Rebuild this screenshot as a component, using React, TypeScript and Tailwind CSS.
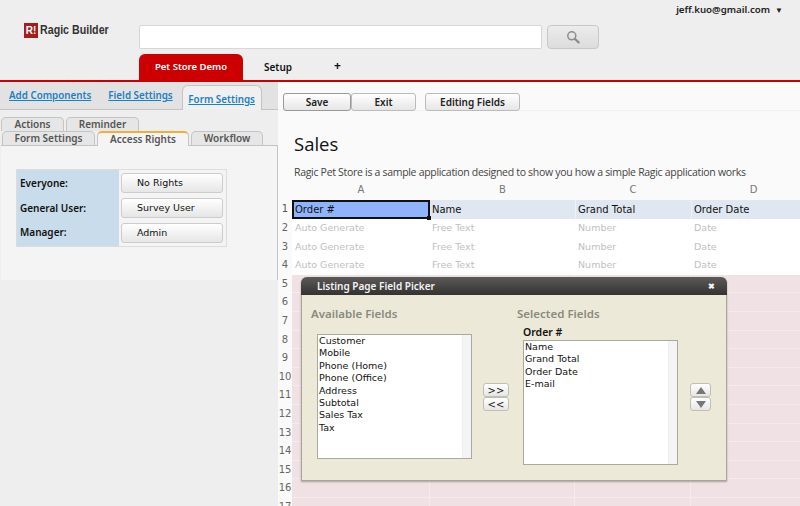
import React from "react";

const bold = "font-['Noto_Sans',sans-serif] font-semibold";

function Btn({ children, className = "" }: { children: React.ReactNode; className?: string }) {
  return (
    <div className={`flex items-center justify-center whitespace-nowrap rounded-[3px] border border-[#bbb] bg-gradient-to-b from-white to-[#e6e6e6] text-[10px] text-[#222] ${className}`}>
      {children}
    </div>
  );
}

function SideTab({ label, className = "" }: { label: string; className?: string }) {
  return (
    <div className={`flex h-[14px] items-center justify-center whitespace-nowrap rounded-t-[5px] border border-b-0 border-[#c4c4c4] bg-[#e6e6e6] text-[10px] text-[#555] ${bold} ${className}`}>
      {label}
    </div>
  );
}

const gridRows = [2, 3, 4];
const pinkRows = [5, 6, 7, 8, 9, 10, 11, 12, 13, 14, 15, 16, 17];

function Rights({ label }: { label: string }) {
  return (
    <Btn className="h-[20px] w-[102px] !justify-start !border-[#ccc] pl-[15px] font-['DejaVu_Sans',sans-serif] !text-[9.5px] !font-normal !text-[#111]">
      {label}
    </Btn>
  );
}

function ListBox({ items, className = "" }: { items: string[]; className?: string }) {
  return (
    <div className={`flex border border-[#a9a9a0] bg-white ${className}`}>
      <div className="flex-1 pl-[1px] font-['DejaVu_Sans',sans-serif] text-[9.5px] leading-[12.4px] text-[#111]">
        {items.map((i) => (
          <div key={i}>{i}</div>
        ))}
      </div>
      <div className="w-[9px] border-l border-[#eee] bg-[#f4f4f4]" />
    </div>
  );
}

export default function App() {
  return (
    <div className="relative h-[506px] w-[800px] overflow-hidden bg-[#fafafa] font-['DejaVu_Sans',sans-serif]">
      {/* header */}
      <header className="relative flex h-[82px] border-b-[2px] border-[#cc0000] bg-[#eeeeee]">
        <div className="flex w-[139px] shrink-0 items-start pl-[24px] pt-[23px]">
          <div className="flex h-[15px] w-[14px] items-center justify-center bg-[#a51c1c] font-['Liberation_Sans',sans-serif] text-[10px] font-bold text-white">
            R!
          </div>
          <span className="ml-[2px] origin-left scale-x-[0.82] whitespace-nowrap font-['Liberation_Sans',sans-serif] text-[13px] font-bold leading-[14px] text-[#333]">
            Ragic Builder
          </span>
        </div>
        <div className="flex flex-col">
          <div className="flex pt-[25px]">
            <div className="h-[24px] w-[403px] rounded-[2px] border border-[#d6d6d6] bg-white" />
            <div className="ml-[5px] flex h-[24px] w-[52px] items-center justify-center rounded-[4px] border border-[#c8c8c8] bg-gradient-to-b from-[#ececec] to-[#dcdcdc]">
              <svg width="14" height="14" viewBox="0 0 14 14" fill="none" stroke="#8c8c8c">
                <circle cx="5.8" cy="5.8" r="4" strokeWidth="1.5" />
                <path d="M8.8 8.8L12.6 12.4" strokeWidth="2.2" strokeLinecap="round" />
              </svg>
            </div>
          </div>
          <nav className={`mt-[5px] flex h-[26px] items-end text-[10px] ${bold}`}>
            <div className="flex h-[26px] w-[104px] items-center justify-center rounded-t-[6px] bg-[#cc0000] text-[9.5px] text-white">
              Pet Store Demo
            </div>
            <div className="flex h-[26px] items-center pl-[21px] text-[#111]">Setup</div>
            <div className="flex h-[26px] items-center pb-[3px] pl-[42px] text-[12px] font-bold text-[#111]">+</div>
          </nav>
        </div>
        <div className={`absolute right-[17px] top-[3px] flex items-center gap-[5px] text-[9.7px] text-[#222] ${bold}`}>
          <span>jeff.kuo@gmail.com</span>
          <span className="text-[8px]">▼</span>
        </div>
      </header>

      <div className="flex h-[424px]">
        {/* left panel */}
        <aside className="h-full w-[278px] shrink-0 bg-[#eeeeee]">
          <div className={`flex h-[28px] items-end whitespace-nowrap border-b border-[#c4c4c4] bg-[#e2e2e2] pl-[9px] text-[9.8px] text-[#1a7fc4] underline ${bold}`}>
            <div className="pb-[5px]">Add Components</div>
            <div className="ml-[17px] pb-[5px]">Field Settings</div>
            <div className="relative top-px ml-[9px] flex h-[25px] w-[80px] items-center justify-center rounded-t-[6px] border border-b-0 border-[#c4c4c4] bg-[#f0f0f0] pt-[4px]">
              Form Settings
            </div>
          </div>
          <div className="pl-[1px] pt-[7px]">
            <div className="flex gap-[2px]">
              <SideTab label="Actions" className="w-[63px]" />
              <SideTab label="Reminder" className="w-[73px]" />
            </div>
            <div className="flex h-[14px] pl-[1px]">
              <SideTab label="Form Settings" className="w-[93px]" />
              <div className={`ml-[2px] flex h-[15px] w-[92px] items-center justify-center whitespace-nowrap rounded-t-[5px] border-x border-t-2 border-x-[#c4c4c4] border-t-[#f0b040] bg-[#f4f4f4] text-[10px] text-[#555] ${bold}`}>
                Access Rights
              </div>
              <SideTab label="Workflow" className="ml-[2px] w-[72px]" />
            </div>
            <div className="h-[135px] w-[277px] border-r border-t border-[#c4c4c4] bg-[#f4f4f4] pl-[15px] pt-[23px]">
              <div className={`flex h-[78px] w-[211px] border border-[#dcdcdc] text-[10px] text-[#111] ${bold}`}>
                <div className="flex w-[102px] flex-col bg-[#c9dcec] pl-[3px] pt-[7px] leading-[12px]">
                  <div className="h-[24.5px]">Everyone:</div>
                  <div className="h-[24.5px]">General User:</div>
                  <div>Manager:</div>
                </div>
                <div className="flex flex-col gap-[5px] pl-[2px] pt-[3px]">
                  <Rights label="No Rights" />
                  <Rights label="Survey User" />
                  <Rights label="Admin" />
                </div>
              </div>
            </div>
          </div>
        </aside>

        {/* main */}
        <main className="relative min-w-0 flex-1">
          <div className={`flex h-[29px] items-start border-b border-[#f2f2f2] pl-[5px] pt-[11px] ${bold}`}>
            <Btn className="h-[18px] w-[68px] !border-[#999]">Save</Btn>
            <Btn className="h-[18px] w-[65px]">Exit</Btn>
            <Btn className="ml-[9px] h-[18px] w-[95px]">Editing Fields</Btn>
          </div>

          <div className="pl-[16px] pt-[20px]">
            <h1 className="font-['Open_Sans',sans-serif] text-[18.5px] leading-[26px] text-[#111]">Sales</h1>
            <p className="mt-[8px] whitespace-nowrap font-['Open_Sans',sans-serif] text-[10.5px] leading-[15px] tracking-[-0.3px] text-[#444]">
              Ragic Pet Store is a sample application designed to show you how a simple Ragic application works
            </p>
          </div>

          {/* sheet */}
          <div className="grid grid-cols-[14px_138px_145px_116px_125px] text-[9.5px] leading-[18.6px]">
            <div className="h-[20px]" />
            {["A", "B", "C", "D"].map((c) => (
              <div key={c} className="h-[20px] text-center text-[10px] leading-[20px] text-[#777]">
                {c}
              </div>
            ))}

            <div className="h-[18.6px] text-center text-[10px] text-[#555]">1</div>
            <div className="relative z-10 h-[19px] border-[2px] border-[#111] bg-[#90b4fb] pl-[1px] text-[10px] leading-[16px] text-[#111]">
              Order #
              <span className="absolute -bottom-[3px] -right-[3px] h-[4px] w-[4px] bg-[#111]" />
            </div>
            <div className="h-[18.6px] bg-[#e0e7f0] pl-[2px] text-[10px] leading-[20px] text-[#111]">Name</div>
            <div className="h-[18.6px] border-l border-[#eef1f6] bg-[#e0e7f0] pl-[2px] text-[10px] leading-[20px] text-[#111]">Grand Total</div>
            <div className="h-[18.6px] border-l border-[#eef1f6] bg-[#e0e7f0] pl-[2px] text-[10px] leading-[20px] text-[#111]">Order Date</div>

            {gridRows.map((n) => (
              <React.Fragment key={n}>
                <div className="h-[18.6px] text-center text-[10px] text-[#666]">{n}</div>
                <div className="h-[18.6px] bg-white pl-[3px] text-[#c0c0c0]">Auto Generate</div>
                <div className="h-[18.6px] bg-white pl-[2px] text-[#c0c0c0]">Free Text</div>
                <div className="h-[18.6px] bg-white pl-[3px] text-[#c0c0c0]">Number</div>
                <div className="h-[18.6px] bg-white pl-[3px] text-[#c0c0c0]">Date</div>
              </React.Fragment>
            ))}

            {pinkRows.map((n) => (
              <React.Fragment key={n}>
                <div className="h-[18.6px] text-center text-[10px] text-[#666]">{n}</div>
                <div className="h-[18.6px] border-b border-r border-[#f6eaec] bg-[#f0e2e4]" />
                <div className="h-[18.6px] border-b border-r border-[#f6eaec] bg-[#f0e2e4]" />
                <div className="h-[18.6px] border-b border-r border-[#f6eaec] bg-[#f0e2e4]" />
                <div className="h-[18.6px] border-b border-[#f6eaec] bg-[#f0e2e4]" />
              </React.Fragment>
            ))}
          </div>

          {/* modal */}
          <div className="absolute left-[23px] top-[195px] z-20 h-[204px] w-[426px] rounded-t-[6px] border border-t-0 border-[#a8a698] bg-[#ece9d8] shadow-[0_1px_2px_rgba(0,0,0,0.3)]">
            <div className={`-mx-px flex h-[18px] items-center justify-between rounded-t-[6px] bg-gradient-to-b from-[#5c5a58] to-[#353331] pl-[16px] pr-[12px] text-[10px] text-[#f4f4f4] ${bold}`}>
              <span>Listing Page Field Picker</span>
              <span className="text-[8px]">✖</span>
            </div>
            <div className="flex">
              <div className="w-[181px] shrink-0 pl-[9px]">
                <div className={`pt-[12px] text-[11.5px] leading-[14px] text-[#8a8a80] ${bold}`}>Available Fields</div>
                <ListBox
                  className="ml-[6px] mt-[13px] h-[125px] w-[155px]"
                  items={["Customer", "Mobile", "Phone (Home)", "Phone (Office)", "Address", "Subtotal", "Sales Tax", "Tax"]}
                />
              </div>
              <div className="flex w-[40px] shrink-0 flex-col pt-[88px]">
                <Btn className="h-[14px] w-[26px] !border-[#c0bfb0]">&gt;&gt;</Btn>
                <Btn className="h-[14px] w-[26px] !border-[#c0bfb0]">&lt;&lt;</Btn>
              </div>
              <div className="shrink-0">
                <div className={`-ml-[6px] pt-[12px] text-[11.5px] leading-[14px] text-[#8a8a80] ${bold}`}>Selected Fields</div>
                <div className={`mt-[4px] text-[10.5px] leading-[14px] text-[#111] ${bold}`}>Order #</div>
                <ListBox className="mt-[1px] h-[125px] w-[155px]" items={["Name", "Grand Total", "Order Date", "E-mail"]} />
              </div>
              <div className="flex shrink-0 flex-col pl-[12px] pt-[88px]">
                <Btn className="h-[14px] w-[21px] !border-[#c0bfb0]">
                  <svg width="10" height="7" viewBox="0 0 10 7"><path d="M5 0L10 7H0Z" fill="#777" /></svg>
                </Btn>
                <Btn className="h-[14px] w-[21px] !border-[#c0bfb0]">
                  <svg width="10" height="7" viewBox="0 0 10 7"><path d="M0 0H10L5 7Z" fill="#777" /></svg>
                </Btn>
              </div>
            </div>
          </div>
        </main>
      </div>
    </div>
  );
}
